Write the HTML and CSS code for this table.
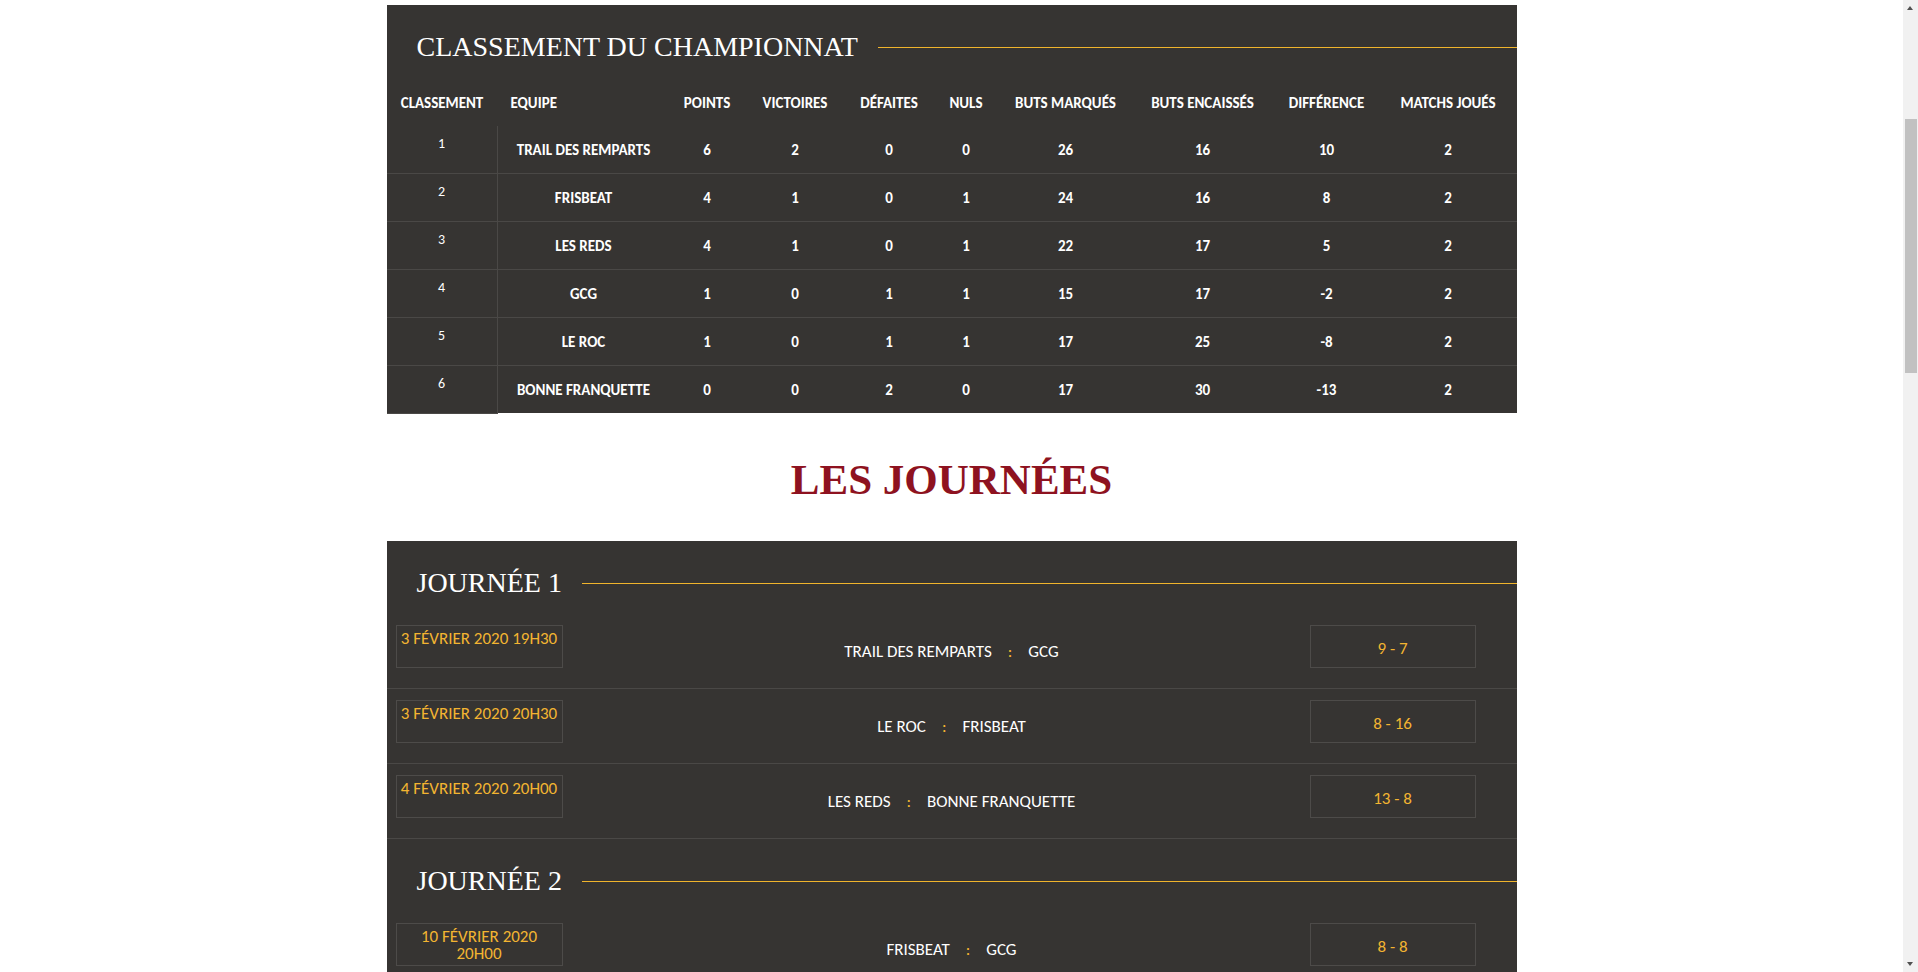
FILE: index.html
```html
<!DOCTYPE html>
<html lang="fr">
<head>
<meta charset="utf-8">
<title>Championnat</title>
<link rel="stylesheet" href="styles.css">
</head>
<body>
<main class="page">
  <section class="panel">
    <div class="panel-head">
      <h2 class="panel-title">CLASSEMENT DU CHAMPIONNAT</h2>
      <span class="panel-rule"></span>
    </div>
    <div class="standings">
      <div class="st-row st-head">
        <div class="st-cell">CLASSEMENT</div>
        <div class="st-cell st-cell-left">EQUIPE</div>
        <div class="st-cell">POINTS</div>
        <div class="st-cell">VICTOIRES</div>
        <div class="st-cell">DÉFAITES</div>
        <div class="st-cell">NULS</div>
        <div class="st-cell">BUTS MARQUÉS</div>
        <div class="st-cell">BUTS ENCAISSÉS</div>
        <div class="st-cell">DIFFÉRENCE</div>
        <div class="st-cell">MATCHS JOUÉS</div>
      </div>
      <div class="st-row">
        <div class="st-rank">1</div>
        <div class="st-cell">TRAIL DES REMPARTS</div>
        <div class="st-cell">6</div><div class="st-cell">2</div><div class="st-cell">0</div><div class="st-cell">0</div>
        <div class="st-cell">26</div><div class="st-cell">16</div><div class="st-cell">10</div><div class="st-cell">2</div>
      </div>
      <div class="st-row">
        <div class="st-rank">2</div>
        <div class="st-cell">FRISBEAT</div>
        <div class="st-cell">4</div><div class="st-cell">1</div><div class="st-cell">0</div><div class="st-cell">1</div>
        <div class="st-cell">24</div><div class="st-cell">16</div><div class="st-cell">8</div><div class="st-cell">2</div>
      </div>
      <div class="st-row">
        <div class="st-rank">3</div>
        <div class="st-cell">LES REDS</div>
        <div class="st-cell">4</div><div class="st-cell">1</div><div class="st-cell">0</div><div class="st-cell">1</div>
        <div class="st-cell">22</div><div class="st-cell">17</div><div class="st-cell">5</div><div class="st-cell">2</div>
      </div>
      <div class="st-row">
        <div class="st-rank">4</div>
        <div class="st-cell">GCG</div>
        <div class="st-cell">1</div><div class="st-cell">0</div><div class="st-cell">1</div><div class="st-cell">1</div>
        <div class="st-cell">15</div><div class="st-cell">17</div><div class="st-cell">-2</div><div class="st-cell">2</div>
      </div>
      <div class="st-row">
        <div class="st-rank">5</div>
        <div class="st-cell">LE ROC</div>
        <div class="st-cell">1</div><div class="st-cell">0</div><div class="st-cell">1</div><div class="st-cell">1</div>
        <div class="st-cell">17</div><div class="st-cell">25</div><div class="st-cell">-8</div><div class="st-cell">2</div>
      </div>
      <div class="st-row st-last">
        <div class="st-rank">6</div>
        <div class="st-cell">BONNE FRANQUETTE</div>
        <div class="st-cell">0</div><div class="st-cell">0</div><div class="st-cell">2</div><div class="st-cell">0</div>
        <div class="st-cell">17</div><div class="st-cell">30</div><div class="st-cell">-13</div><div class="st-cell">2</div>
      </div>
    </div>
  </section>

  <h1 class="section-title">LES JOURNÉES</h1>

  <section class="panel">
    <div class="panel-head">
      <h2 class="panel-title">JOURNÉE 1</h2>
      <span class="panel-rule"></span>
    </div>
    <div class="match">
      <div class="match-date">3 FÉVRIER 2020 19H30</div>
      <div class="match-teams"><span>TRAIL DES REMPARTS</span><span class="match-sep">:</span><span>GCG</span></div>
      <div class="match-score">9 - 7</div>
    </div>
    <div class="match">
      <div class="match-date">3 FÉVRIER 2020 20H30</div>
      <div class="match-teams"><span>LE ROC</span><span class="match-sep">:</span><span>FRISBEAT</span></div>
      <div class="match-score">8 - 16</div>
    </div>
    <div class="match">
      <div class="match-date">4 FÉVRIER 2020 20H00</div>
      <div class="match-teams"><span>LES REDS</span><span class="match-sep">:</span><span>BONNE FRANQUETTE</span></div>
      <div class="match-score">13 - 8</div>
    </div>

    <div class="panel-head">
      <h2 class="panel-title">JOURNÉE 2</h2>
      <span class="panel-rule"></span>
    </div>
    <div class="match">
      <div class="match-date">10 FÉVRIER 2020 20H00</div>
      <div class="match-teams"><span>FRISBEAT</span><span class="match-sep">:</span><span>GCG</span></div>
      <div class="match-score">8 - 8</div>
    </div>
  </section>
</main>

<div class="scrollbar" aria-hidden="true">
  <span class="scroll-arrow scroll-up"></span>
  <span class="scroll-thumb"></span>
  <span class="scroll-arrow scroll-down"></span>
</div>
</body>
</html>
```

FILE: styles.css
```css
html, body {
  margin: 0;
  padding: 0;
  height: 100%;
  overflow: hidden;
  background: #ffffff;
}

body {
  padding-right: 15px;
  box-sizing: border-box;
  font-family: "Carlito", "Calibri", "Liberation Sans Narrow", "DejaVu Sans Condensed", "Liberation Sans", sans-serif;
  color: #ffffff;
}

.page {
  width: 1130px;
  margin: 5px auto 0;
}

.panel {
  background: #363432;
}

.panel-head {
  display: flex;
  align-items: center;
  padding: 26px 0 15px 30px;
}

.panel-title {
  margin: 0;
  font-family: "Liberation Serif", "Times New Roman", serif;
  font-weight: normal;
  font-size: 28px;
  line-height: 32px;
  color: #ffffff;
  white-space: nowrap;
}

.panel-rule {
  flex: 1;
  height: 1px;
  margin-left: 20px;
  background: #f0b42c;
}

/* standings */
.st-row {
  display: grid;
  grid-template-columns: 111px 172px 75px 101px 87px 67px 132px 142px 106px 1fr;
  height: 48px;
  box-sizing: border-box;
  border-bottom: 1px solid #4a4846;
}

.st-head {
  border-bottom: none;
  padding-top: 2px;
}

.st-last {
  border-bottom: none;
  height: 47px;
}

.st-cell {
  display: flex;
  align-items: center;
  justify-content: center;
  font-size: 15px;
  font-weight: bold;
  white-space: nowrap;
}

.st-cell-left {
  justify-content: flex-start;
  padding-left: 13px;
}

.st-rank {
  border-right: 1px solid #4a4846;
  text-align: center;
  font-size: 14px;
  line-height: 18px;
  padding-top: 9px;
}

.st-last .st-rank {
  border-bottom: 1px solid #4a4846;
  height: 48px;
  box-sizing: border-box;
}

/* section title */
.section-title {
  margin: 42px 0 37px;
  text-align: center;
  font-family: "Liberation Serif", "Times New Roman", serif;
  font-weight: bold;
  font-size: 43px;
  line-height: 49px;
  color: #8e1220;
}

/* matches */
.match {
  display: grid;
  grid-template-columns: 1fr auto 1fr;
  height: 75px;
  box-sizing: border-box;
  border-bottom: 1px solid #4a4846;
  font-size: 17px;
}

.match-date {
  justify-self: start;
  align-self: start;
  margin: 11px 0 0 9px;
  width: 167px;
  height: 43px;
  box-sizing: border-box;
  border: 1px solid #4d4b49;
  padding: 4px 2px 0;
  text-align: center;
  line-height: 17px;
  color: #f3b431;
}

.match-teams {
  display: flex;
  align-self: center;
  white-space: nowrap;
  line-height: 20px;
  padding-top: 2px;
  color: #ffffff;
}

.match-sep {
  margin: 0 16px;
  color: #f3b431;
}

.match-score {
  justify-self: end;
  align-self: start;
  margin: 11px 41px 0 0;
  width: 166px;
  height: 43px;
  box-sizing: border-box;
  border: 1px solid #4d4b49;
  padding-top: 3px;
  display: flex;
  align-items: center;
  justify-content: center;
  color: #f3b431;
}

/* fake browser scrollbar */
.scrollbar {
  position: fixed;
  top: 0;
  right: 0;
  bottom: 0;
  width: 15px;
  background: #f1f1f1;
}

.scroll-thumb {
  position: absolute;
  left: 2px;
  right: 1px;
  top: 119px;
  height: 254px;
  background: #c1c1c1;
}

.scroll-arrow {
  position: absolute;
  left: 4px;
  width: 0;
  height: 0;
  border-left: 3.5px solid transparent;
  border-right: 3.5px solid transparent;
}

.scroll-up {
  top: 6px;
  border-bottom: 4px solid #505050;
}

.scroll-down {
  bottom: 6px;
  border-top: 4px solid #505050;
}
```
